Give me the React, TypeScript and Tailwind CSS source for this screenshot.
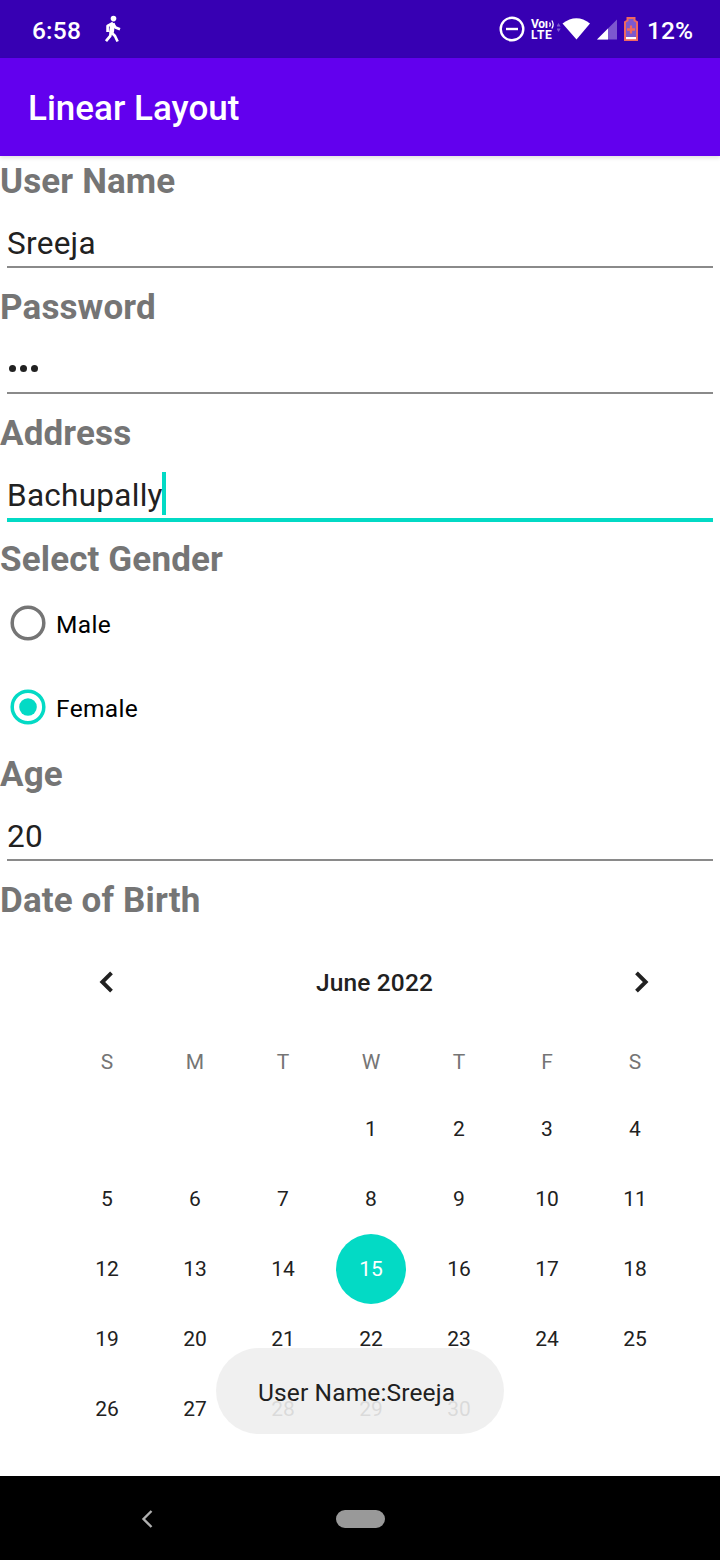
import React from "react";

function Label({ children }: { children: React.ReactNode }) {
  return (
    <div className="h-[47px] shrink-0 text-[35px] leading-[52px] font-bold tracking-[0.14px] text-[#757575]">{children}</div>
  );
}

function Field({ value, focused = false, password = false }: { value: string; focused?: boolean; password?: boolean }) {
  return (
    <div className="flex h-[79px] shrink-0 flex-col px-[7px] pt-[17px] text-[31.5px] text-[#212121]">
      <div className="flex h-[46px] items-start">
        {password ? (
          <div className="flex h-[45px] items-center gap-[4.5px] pl-[2px]">
            {value.split("").map((_, i) => (
              <span key={i} className="size-[6.5px] rounded-full bg-[#212121]" />
            ))}
          </div>
        ) : (
          <span className="leading-[47px] tracking-[0.28px]">{value}</span>
        )}
        {focused && <span className="-ml-px h-[43px] w-[4px] bg-[#03dac5]" />}
      </div>
      <div className={focused ? "h-[4px] shrink-0 bg-[#03dac5]" : "h-[2px] shrink-0 bg-[#8a8a8a]"} />
    </div>
  );
}

function Radio({ label, checked = false }: { label: string; checked?: boolean }) {
  return (
    <label className="flex h-[84px] shrink-0 items-center pl-[10px]">
      <svg className="h-9 w-9" viewBox="0 0 36 36" fill="none">
        <circle cx="18" cy="18" r="15.8" stroke={checked ? "#03dac5" : "#757575"} strokeWidth="3.5" />
        {checked && <circle cx="18" cy="18" r="8.8" fill="#03dac5" />}
      </svg>
      <span className="pt-[4px] pl-[10px] text-[24.5px] leading-[30px] tracking-[0.35px] text-black">{label}</span>
    </label>
  );
}

function StatusBar() {
  return (
    <header className="flex h-[58px] shrink-0 items-center bg-[#3700b3] pl-8 text-[24.5px] font-medium text-white">
      <span className="pt-[4px] tracking-[0.2px]">6:58</span>
      <svg className="ml-[23px] h-[28px] w-[18px]" viewBox="0 0 18 28" fill="none" stroke="#fff" strokeWidth="2.700" strokeLinejoin="round">
        <circle cx="9.500" cy="3.600" r="2.800" fill="#fff" stroke="none" />
        <path d="M8.600 8.200L7.500 17.500" strokeWidth="4.800" />
        <path d="M9 8L3.600 11V17M9 8.500L11.500 12.500L16 14.200" />
        <path d="M6.800 16.500L6.300 20.800L2 26.200M7 17L11 21L13.600 26.500" />
      </svg>
      <div className="ml-auto flex items-center pr-[27px]">
        <svg className="h-[26px] w-[26px]" viewBox="0 0 26 26" fill="none" stroke="#fff" strokeWidth="2.4">
          <circle cx="13" cy="13" r="11.3" />
          <path d="M7 13h12" />
        </svg>
        <span className="ml-[6px] flex w-[26px] flex-col pt-[2px] text-[12px] leading-[11px] font-bold">
          <span className="flex items-center tracking-[-0.4px]">
            Voı
            <svg className="ml-px h-[9px] w-[6px]" viewBox="0 0 6 9" fill="none" stroke="#fff" strokeWidth="1.300">
              <path d="M0.500 2.500Q2 4.500 0.500 6.500M2.800 0.500Q5.500 4.500 2.800 8.500" />
            </svg>
          </span>
          <span className="tracking-[0.7px]">LTE</span>
        </span>
        <svg className="h-[26px] w-[36px]" viewBox="0 0 36 26">
          <path d="M1.500 7L3.700 10.500H-0.700zM1.500 16L3.700 12.500H-0.700z" fill="#7c58cf" />
          <path d="M5.500 7.500Q19.500-3 33 7.500L19.500 23.500z" fill="#fff" />
        </svg>
        <svg className="ml-[2px] h-[26px] w-[24px]" viewBox="0 0 24 26">
          <path d="M2 23.500L22 3.500V23.500z" fill="#7c58cf" />
          <path d="M2 23.500L13 12.500V23.500z" fill="#fff" />
        </svg>
        <svg className="ml-[4px] h-[26px] w-[16px]" viewBox="0 0 16 26">
          <path d="M2 6L4.500 4.500V2h7v2.500L14 6v18H2z" fill="#7c58cf" stroke="#f0685f" strokeWidth="2" />
          <path d="M3 21h10v2.200H3z" fill="#fff" />
          <path d="M8 9.500v8M4 13.500h8" stroke="#f0685f" strokeWidth="2.300" />
        </svg>
        <span className="ml-[8px] pt-[4px]">12%</span>
      </div>
    </header>
  );
}

const days = Array.from({ length: 35 }, (_, i) => i - 2);

function Calendar() {
  return (
    <section className="flex flex-col pl-[63px] text-[21px] text-[#212121]">
      <div className="flex h-[120px] items-center justify-between pr-[40px] pl-[6px]">
        <svg className="h-[42px] w-[74px]" viewBox="-16 0 74 42" fill="none" stroke="#212121" strokeWidth="3.900">
          <path d="M26.500 11.800L17.300 21L26.500 30.200" />
        </svg>
        <span className="pt-[2px] text-[24.5px] font-medium tracking-[0.15px]">June 2022</span>
        <svg className="h-[42px] w-[74px]" viewBox="-16 0 74 42" fill="none" stroke="#212121" strokeWidth="3.900">
          <path d="M14.500 11.800L23.700 21L14.500 30.200" />
        </svg>
      </div>
      <div className="grid w-[616px] grid-cols-7 text-center">
        {["S", "M", "T", "W", "T", "F", "S"].map((d, i) => (
          <span key={i} className="h-[52px] leading-[40px] text-[#757575]">{d}</span>
        ))}
        {days.map((d) => (
          <span key={d} className="flex h-[70px] items-center justify-center">
            {d > 0 && d <= 30 && (
              <span className={d === 15 ? "size-[70px] rounded-full bg-[#03dac5] leading-[71px] text-white" : "leading-[71px]"}>{d}</span>
            )}
          </span>
        ))}
      </div>
    </section>
  );
}

export default function App() {
  return (
    <div className="relative flex h-[1560px] w-[720px] flex-col overflow-hidden bg-white font-['Roboto',sans-serif]">
      <StatusBar />
      <div className="z-10 flex h-[98px] shrink-0 items-center bg-[#6200ee] pt-[4px] pl-7 text-[35px] font-medium text-white shadow-[0_2px_4px_rgba(0,0,0,0.12)]">
        Linear Layout
      </div>
      <main className="flex flex-1 flex-col">
        <Label>User Name</Label>
        <Field value="Sreeja" />
        <Label>Password</Label>
        <Field value="123" password />
        <Label>Address</Label>
        <Field value="Bachupally" focused />
        <Label>Select Gender</Label>
        <Radio label="Male" />
        <Radio label="Female" checked />
        <Label>Age</Label>
        <Field value="20" />
        <Label>Date of Birth</Label>
        <Calendar />
      </main>
      <div className="absolute top-[1348px] left-[216px] flex h-[86px] w-[288px] items-center rounded-[43px] bg-[#eeeeee]/90 pt-[4px] pl-[42px] text-[24.5px] tracking-[0.14px] text-[#212121]">
        User Name:Sreeja
      </div>
      <nav className="flex h-[84px] shrink-0 items-center bg-black pt-[1px] pl-[138px]">
        <svg className="h-[20px] w-[18px]" viewBox="0 0 18 20" fill="none" stroke="#b0b0b0" strokeWidth="2.400">
          <path d="M13.500 2L5.500 10L13.500 18" />
        </svg>
        <span className="ml-[180px] h-[18px] w-[49px] rounded-full bg-[#999999]" />
      </nav>
    </div>
  );
}
